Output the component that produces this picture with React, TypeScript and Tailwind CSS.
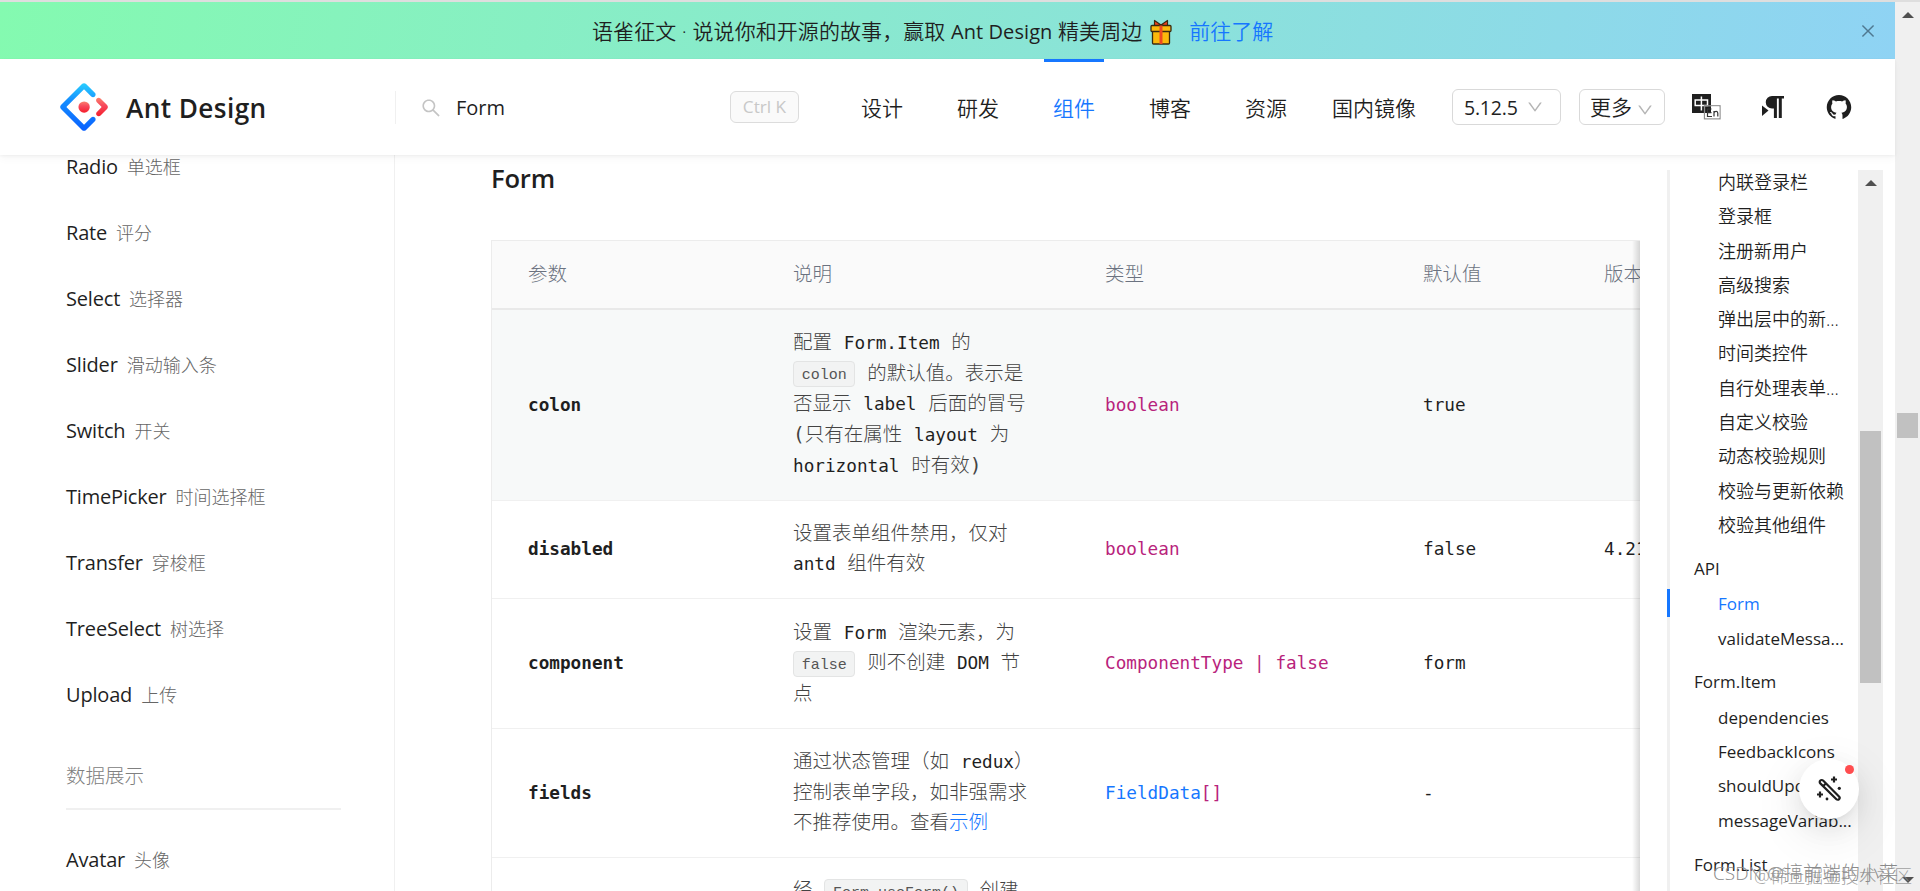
import type { ReactNode } from 'react';
import { AiFillGithub, AiOutlineClose, AiOutlineDown, AiOutlineSearch } from 'react-icons/ai';

const sidebarItems = [
  { name: 'Radio', label: '单选框' },
  { name: 'Rate', label: '评分' },
  { name: 'Select', label: '选择器' },
  { name: 'Slider', label: '滑动输入条' },
  { name: 'Switch', label: '开关' },
  { name: 'TimePicker', label: '时间选择框' },
  { name: 'Transfer', label: '穿梭框' },
  { name: 'TreeSelect', label: '树选择' },
  { name: 'Upload', label: '上传' },
];

const demoAnchors = [
  '内联登录栏',
  '登录框',
  '注册新用户',
  '高级搜索',
  '弹出层中的新...',
  '时间类控件',
  '自行处理表单...',
  '自定义校验',
  '动态校验规则',
  '校验与更新依赖',
  '校验其他组件',
];

function Logo() {
  return (
    <svg viewBox="0 0 200 200" className="h-12 w-12 shrink-0">
      <defs>
        <linearGradient id="logoBlue" x1="50%" y1="0%" x2="45%" y2="100%">
          <stop offset="0%" stopColor="#29CDFF" />
          <stop offset="38%" stopColor="#148EFF" />
          <stop offset="100%" stopColor="#0A60FF" />
        </linearGradient>
        <linearGradient id="logoRed" x1="50%" y1="0%" x2="50%" y2="100%">
          <stop offset="0%" stopColor="#FA816E" />
          <stop offset="41%" stopColor="#F74A5C" />
          <stop offset="100%" stopColor="#F51D2C" />
        </linearGradient>
      </defs>
      <path
        fill="url(#logoBlue)"
        d="M91.588 4.177L4.18 91.513c-4.7 4.695-4.7 12.279 0 16.974l87.408 87.336c4.7 4.696 12.29 4.696 16.989 0l36.648-36.618c4.209-4.205 4.209-11.023 0-15.228s-11.031-4.205-15.24 0l-27.783 27.76c-1.17 1.17-2.945 1.17-4.114 0l-69.802-69.744c-1.17-1.169-1.17-2.942 0-4.111l69.802-69.744c1.17-1.169 2.944-1.169 4.114 0l27.783 27.76c4.209 4.205 11.032 4.205 15.24 0s4.209-11.022 0-15.227L108.58 4.056c-4.718-4.594-12.311-4.557-16.992.12z"
      />
      <path
        fill="url(#logoRed)"
        d="M153.686 135.855c4.208 4.205 11.031 4.205 15.24 0l27.034-27.012c4.7-4.696 4.7-12.28 0-16.974l-27.27-27.151c-4.218-4.2-11.043-4.194-15.254.014s-4.209 11.022 0 15.227l18.418 18.403c1.17 1.169 1.17 2.943 0 4.111l-18.168 18.154c-4.209 4.205-4.209 11.023 0 15.228z"
      />
      <ellipse cx="100.5" cy="100.4" rx="23.6" ry="23.6" fill="url(#logoRed)" />
    </svg>
  );
}

function GiftIcon() {
  return (
    <svg viewBox="0 0 22 26" className="mx-2 h-[26px] w-[22px]">
      <path d="M11 6L4.500 1.500 4.500 7zM11 6l6.500-4.500V7z" fill="#f0441f" stroke="#3a2a12" strokeWidth="1.200" strokeLinejoin="round" />
      <rect x="2.500" y="11" width="17" height="14" rx="1" fill="#fbb90c" stroke="#3a2a12" strokeWidth="1.300" />
      <rect x="1" y="6.500" width="20" height="6" rx="1" fill="#fbb90c" stroke="#3a2a12" strokeWidth="1.300" />
      <path d="M11 6.500V25" stroke="#ee4a22" strokeWidth="3" />
    </svg>
  );
}

function LangIcon() {
  return (
    <svg viewBox="0 0 30 26" className="h-[26px] w-[30px]">
      <rect x="0" y="0" width="19" height="19" fill="#1f1f1f" />
      <path d="M3.200 6h12.300v5.500H3.200zM9.400 2.500v14" fill="none" stroke="#fff" strokeWidth="1.500" />
      <rect x="12.500" y="11.800" width="15.500" height="13" fill="none" stroke="#8c8c8c" strokeWidth="1.300" />
      <path d="M19.200 19v5.200h8.200V12.400h-8.200z" fill="#fff" />
      <path d="M13.200 19h6v5.200h-6z" fill="#fff" />
      <path d="M19.500 15h-4v7.500h4.500M15.500 18.700h4M22 22.500v-5.500M22 18.800c1-2 3.800-1.800 3.800.4v3.300" fill="none" stroke="#333" strokeWidth="1.200" />
    </svg>
  );
}

function DirectionIcon() {
  return (
    <svg viewBox="0 0 22 22" className="h-[22px] w-[22px]" fill="#1f1f1f">
      <path d="M0 9.500l6.500 5L0 20z" />
      <path d="M10 0H22v2.500h-2.200V22h-3V2.500h-1.900V22h-3V12.500H10a6.200 6.200 0 0 1 0-12.500z" />
    </svg>
  );
}

function WandIcon() {
  return (
    <svg viewBox="0 0 26 26" className="h-[26px] w-[26px]" fill="none" stroke="#1f1f1f">
      <path d="M4.300 4.600a1.900 1.900 0 0 1 2.800 0L23 20.500a1.800 1.800 0 0 1-2.600 2.700L4.300 7.400a1.900 1.900 0 0 1 0-2.800zM9.800 7.500l-2.500 2.500" strokeWidth="2.200" />
      <path d="M18 .5v6M15 3.500h6M4 15.500v6M1 18.500h6" strokeWidth="2.200" />
      <circle cx="23.300" cy="12.300" r="1.600" fill="#1f1f1f" stroke="none" />
      <circle cx="11" cy="23" r="1.400" fill="#1f1f1f" stroke="none" />
    </svg>
  );
}

// Latin words inside the description cells
function Mono({ children }: { children: ReactNode }) {
  return <span className="text-[17.7px] text-[#1f1f1f]">{children}</span>;
}

function Code({ children }: { children: ReactNode }) {
  return (
    <code className="inline-block h-[26px] rounded-[4px] border border-[#e3e4e4] bg-[#f2f3f3] px-[7.7px] align-middle font-['Liberation_Mono','Noto_Sans_CJK_SC',monospace] text-[15px] leading-[27px] text-[#555]">
      {children}
    </code>
  );
}

interface RowProps {
  name: string;
  lines: ReactNode[];
  type: ReactNode;
  value: string;
  version?: string;
  hovered?: boolean;
}

function Row({ name, lines, type, value, version, hovered }: RowProps) {
  return (
    <div
      className={`grid grid-cols-[265px_312px_318px_181px_160px] items-center border-b border-[#f0f0f0] pb-[18.3px] pt-[18.3px] text-[17.7px] ${
        hovered ? 'bg-[#f7f9f9]' : 'bg-white'
      }`}
    >
      <div className="px-9 font-bold">{name}</div>
      <div className="px-9 text-[19.5px] font-light text-[#434343]">
        {lines.map((line, i) => (
          <div key={i} className="h-[30.6px] whitespace-pre leading-[30.6px]">
            {line}
          </div>
        ))}
      </div>
      <div className="whitespace-nowrap px-9 text-[#b8237c]">{type}</div>
      <div className="px-9">{value}</div>
      <div className="px-9">{version}</div>
    </div>
  );
}

function AnchorItem({ children, active }: { children: ReactNode; active?: boolean }) {
  return (
    <div className={`h-[34.3px] truncate pl-12 leading-[34.3px] ${active ? 'text-[#1677ff]' : ''}`}>{children}</div>
  );
}

function AnchorTitle({ children }: { children: ReactNode }) {
  return <div className="mt-[8.6px] h-[36.4px] pl-6 leading-[35px]">{children}</div>;
}

function Header() {
  return (
    <header className="relative z-10 flex h-24 shrink-0 items-center bg-white shadow-[0_1px_3px_rgba(0,0,0,0.05),0_4px_8px_rgba(0,0,0,0.03)]">
      <div className="flex w-[395px] items-center pl-[60px]">
        <Logo />
        <span className="ml-[18px] mt-[3px] text-[26.2px] font-semibold tracking-[0.4px]">Ant Design</span>
      </div>
      <div className="flex h-[33px] w-[335px] items-center border-l border-[#f0f0f0] pl-6">
        <AiOutlineSearch size={22} className="mt-0.5 text-[#c4c4c4]" />
        <span className="ml-[14px] mt-0.5 text-[20px]">Form</span>
      </div>
      <div className="flex h-8 w-[69px] items-center justify-center rounded-md border border-[#dcdcdc] bg-[#fafafa] text-[17.2px] text-[#c8c8c8]">
        Ctrl K
      </div>
      <nav className="flex h-full gap-[54px] pl-[62px] font-[350] leading-[98px]">
        <span>设计</span>
        <span>研发</span>
        <span className="relative text-[#1677ff]">
          组件
          <i className="absolute -left-[9px] top-0 h-[3px] w-[60px] bg-[#1677ff]" />
        </span>
        <span>博客</span>
        <span>资源</span>
        <span className="-ml-[9px]">国内镜像</span>
      </nav>
      <div className="ml-[36px] flex h-9 w-[109px] items-center rounded-md border border-[#d9d9d9] pl-[11px]">
        <span className="mt-0.5 text-[19.5px] tracking-[-0.2px]">5.12.5</span>
        <AiOutlineDown size={18} className="ml-2 text-[#b5b5b5]" />
      </div>
      <div className="ml-[18px] flex h-9 w-[86px] items-center rounded-md border border-[#d9d9d9] pl-[10px] font-[350]">
        <span className="mt-0.5">更多</span>
        <AiOutlineDown size={18} className="ml-1 mt-1.5 text-[#b5b5b5]" />
      </div>
      <div className="ml-[27px] flex items-center">
        <LangIcon />
        <span className="ml-[40px]">
          <DirectionIcon />
        </span>
        <AiFillGithub size={28} className="ml-[41px]" />
      </div>
    </header>
  );
}

export default function App() {
  return (
    <div className="relative flex h-[891px] w-[1920px] overflow-hidden border-t-2 border-[#dedede] bg-white font-['Open_Sans','Noto_Sans_CJK_SC',sans-serif] text-[21px] text-[#1f1f1f]">
      <div className="flex w-[1895px] flex-col">
        <div className="flex h-[57px] shrink-0 items-center bg-[linear-gradient(100deg,#84fab0,#8fd3f4)]">
          <div className="flex items-center pl-[592px] pt-0.5 font-[350]">
            <span className="whitespace-pre tracking-[0.08px]">
              语雀征文 · 说说你和开源的故事，赢取 <span className="text-[20px] font-normal">Ant Design</span> 精美周边
            </span>
            <GiftIcon />
            <span className="ml-[9px] text-[#1677ff]">前往了解</span>
          </div>
          <AiOutlineClose size={18} className="ml-auto mr-[18px] text-[#4f7890]" />
        </div>

        <Header />

        <div className="flex min-h-0 flex-1 overflow-hidden">
          <aside className="w-[395px] shrink-0 border-r border-[#f0f0f0] pl-[66px]">
            <div className="-mt-[21px]">
              {sidebarItems.map((item) => (
                <div key={item.name} className="flex h-[66px] items-center gap-[9px]">
                  <span className="text-[20px] tracking-[-0.18px]">{item.name}</span>
                  <span className="text-[18px] font-light text-[#666]">{item.label}</span>
                </div>
              ))}
            </div>
            <div className="mt-[15px] flex h-[67px] w-[275px] items-center border-b-2 border-[#f0f0f0] pt-px text-[19.5px] font-light text-[#808080]">
              数据展示
            </div>
            <div className="mt-[17px] flex h-[66px] items-center gap-[9px]">
              <span className="text-[20px] tracking-[-0.18px]">Avatar</span>
              <span className="text-[18px] font-light text-[#666]">头像</span>
            </div>
          </aside>

          <main className="w-[1245px] shrink-0 pl-24">
            <h3 className="h-[85px] pt-[5px] text-[25.6px] font-semibold leading-[38px] tracking-[-0.2px]">Form</h3>
            <div className="relative overflow-hidden border-l border-t border-[#ececec] font-['DejaVu_Sans_Mono','Noto_Sans_CJK_SC',monospace]">
              <div className="grid h-[69px] w-[1236px] grid-cols-[265px_312px_318px_181px_160px] items-center border-b-2 border-[#e9e9e9] bg-[#fafafa] text-[19.5px] font-light text-[#6b7280]">
                <div className="px-9">参数</div>
                <div className="px-9">说明</div>
                <div className="px-9">类型</div>
                <div className="px-9">默认值</div>
                <div className="px-9">版本</div>
              </div>
              <div className="w-[1236px]">
                <Row
                  hovered
                  name="colon"
                  lines={[
                    <>配置 <Mono>Form.Item</Mono> 的</>,
                    <><Code>colon</Code> 的默认值。表示是</>,
                    <>否显示 <Mono>label</Mono> 后面的冒号</>,
                    <>(只有在属性 <Mono>layout</Mono> 为</>,
                    <><Mono>horizontal</Mono> 时有效)</>,
                  ]}
                  type="boolean"
                  value="true"
                />
                <Row
                  name="disabled"
                  lines={['设置表单组件禁用，仅对', <><Mono>antd</Mono> 组件有效</>]}
                  type="boolean"
                  value="false"
                  version="4.21.0"
                />
                <Row
                  name="component"
                  lines={[
                    <>设置 <Mono>Form</Mono> 渲染元素，为</>,
                    <><Code>false</Code> 则不创建 <Mono>DOM</Mono> 节</>,
                    '点',
                  ]}
                  type="ComponentType | false"
                  value="form"
                />
                <Row
                  name="fields"
                  lines={[
                    <>通过状态管理（如 <Mono>redux</Mono>）</>,
                    '控制表单字段，如非强需求',
                    <>不推荐使用。查看<span className="text-[#1677ff]">示例</span></>,
                  ]}
                  type={<><span className="text-[#1677ff]">FieldData</span>[]</>}
                  value="-"
                />
                <Row
                  name="form"
                  lines={[
                    <>经 <Code>Form.useForm()</Code> 创建</>,
                    <>的 <Mono>form</Mono> 控制实例，不提</>,
                    '供时会自动创建',
                  ]}
                  type="FormInstance"
                  value="-"
                />
              </div>
              {/* fade on the clipped side of the scrollable table */}
              <div className="absolute inset-y-0 right-0 w-2 bg-gradient-to-r from-transparent to-black/15" />
            </div>
          </main>

          <div className="ml-[27px] mt-[15px] flex w-[216px]">
            <div className="relative w-[191px] border-l-[3px] border-[#f0f0f0] text-[17px]">
              <i className="absolute -left-[3px] top-[419px] h-7 w-[3px] bg-[#1677ff]" />
              <div className="-mt-[5px] text-[18px] font-[350]">
                {demoAnchors.map((text) => (
                  <AnchorItem key={text}>{text}</AnchorItem>
                ))}
              </div>
              <AnchorTitle>API</AnchorTitle>
              <AnchorItem active>Form</AnchorItem>
              <AnchorItem>validateMessa...</AnchorItem>
              <AnchorTitle>Form.Item</AnchorTitle>
              <AnchorItem>dependencies</AnchorItem>
              <AnchorItem>FeedbackIcons</AnchorItem>
              <AnchorItem>shouldUpdate</AnchorItem>
              <AnchorItem>messageVariab...</AnchorItem>
              <AnchorTitle>Form.List</AnchorTitle>
            </div>
            <div className="flex w-[25px] flex-col items-center bg-[#f0f0f0]">
              <i className="mt-[10px] h-0 w-0 border-x-[6px] border-b-[6px] border-x-transparent border-b-[#505050]" />
              <i className="mt-[245px] h-[252px] w-[21px] bg-[#c1c1c1]" />
            </div>
          </div>
        </div>
      </div>

      <div className="flex w-[25px] flex-col items-center bg-[#f0f0f0]">
        <i className="mt-[10px] h-0 w-0 border-x-[6px] border-b-[6px] border-x-transparent border-b-[#505050]" />
        <i className="mt-[395px] h-[25px] w-[21px] bg-[#c1c1c1]" />
        <i className="mb-2 mt-auto h-0 w-0 border-x-[6px] border-t-[6px] border-x-transparent border-t-[#505050]" />
      </div>

      {/* floating theme switch */}
      <div className="absolute left-[1799px] top-[757px] z-20 flex h-[60px] w-[60px] items-center justify-center rounded-full bg-white shadow-[0_9px_24px_rgba(0,0,0,0.08),0_5px_9px_-6px_rgba(0,0,0,0.12),0_14px_42px_12px_rgba(0,0,0,0.05)]">
        <WandIcon />
        <i className="absolute right-[5px] top-[6px] h-[9px] w-[9px] rounded-full bg-[#ff4d4f]" />
      </div>

      <div className="absolute left-[1713px] top-[856px] z-30 whitespace-nowrap text-[19px] font-light leading-[30px] text-[#8a8a8a]">
        CSDN @搞前端的小菜
      </div>
      <div className="absolute left-[1754px] top-[859px] z-30 whitespace-nowrap text-[17.800px] font-light leading-[30px] text-[#8a8a8a]/80">
        @稀土掘金技术社区
      </div>
    </div>
  );
}
